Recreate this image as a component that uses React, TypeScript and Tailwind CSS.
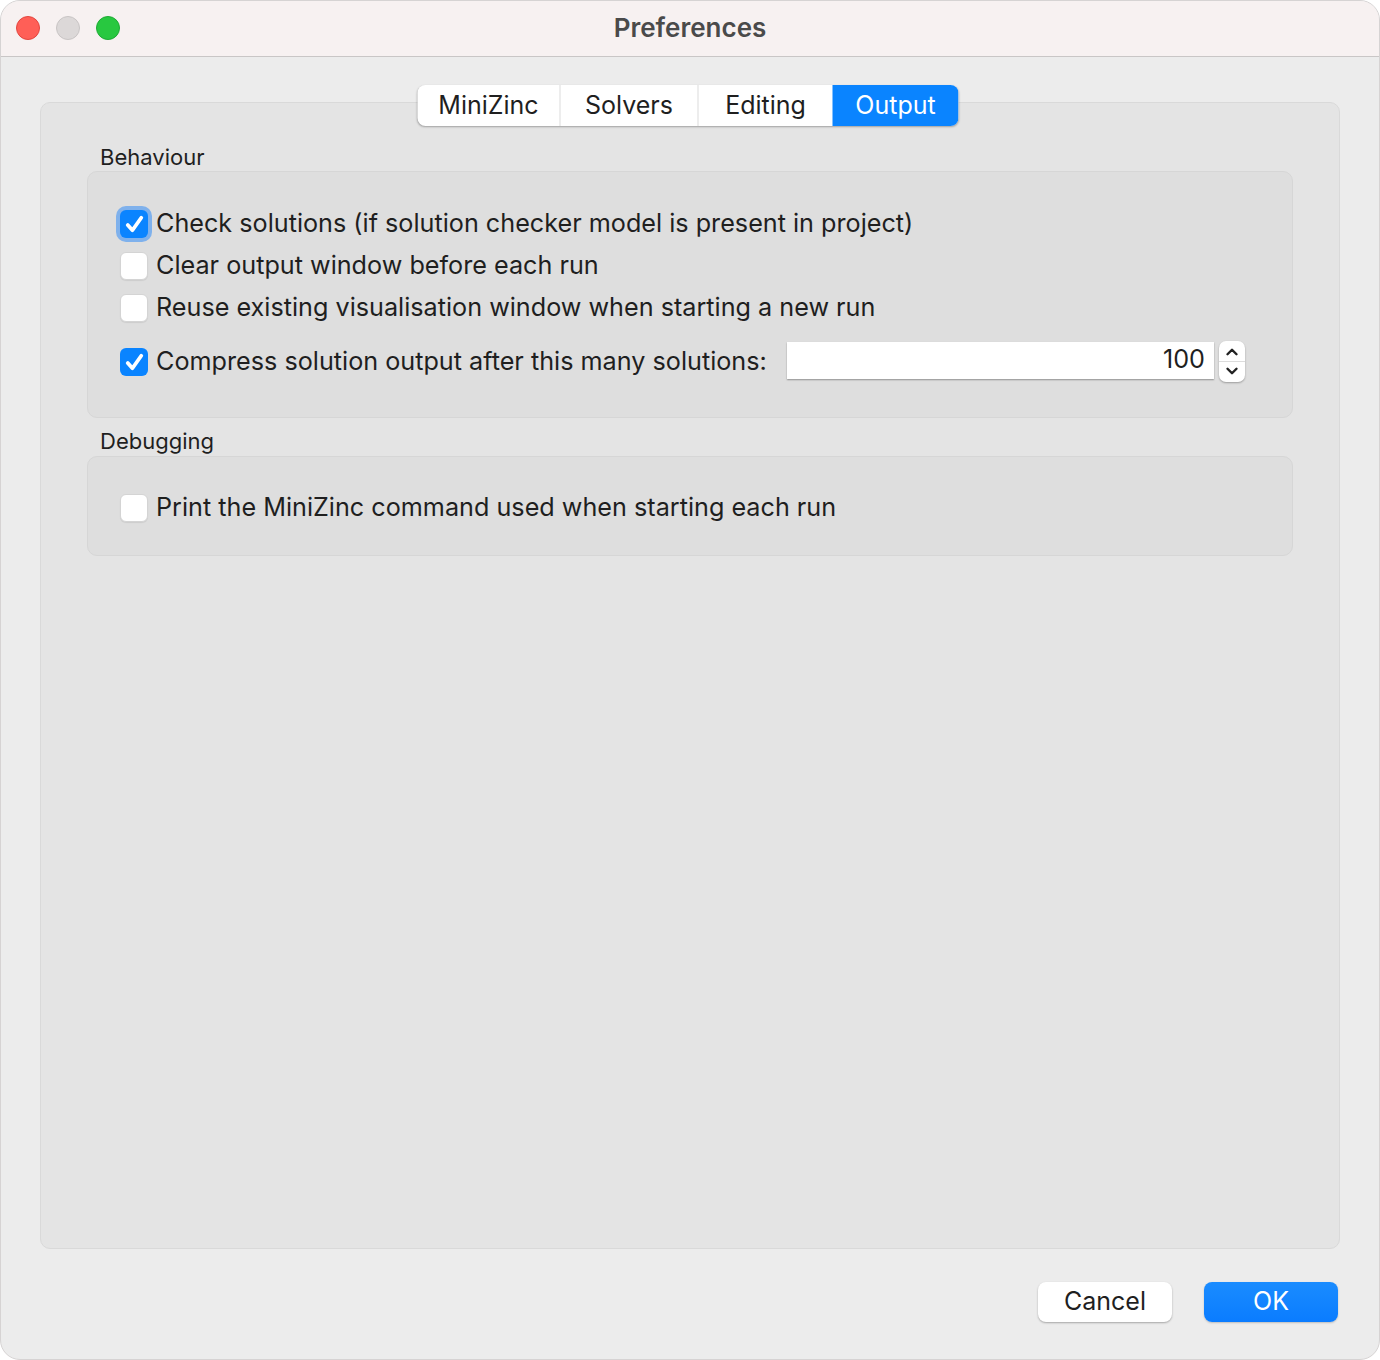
import { ChevronUp, ChevronDown } from "lucide-react"

function Box({ checked, focused }: { checked?: boolean; focused?: boolean }) {
  if (checked) {
    return (
      <span
        className={
          "flex h-[28px] w-[28px] shrink-0 items-center justify-center rounded-[6px] bg-[#0a84ff] " +
          (focused ? "ring-[4px] ring-[#7fb1ec]" : "")
        }
      >
        <svg viewBox="0 0 24 24" className="h-[25px] w-[25px]" fill="none">
          <path d="M5.5 12.5 L10 17.5 L18.5 5.5" stroke="white" strokeWidth="3.6" strokeLinecap="round" strokeLinejoin="round" />
        </svg>
      </span>
    )
  }
  return (
    <span className="block h-[28px] w-[28px] shrink-0 rounded-[6px] border border-[#d4d4d4] bg-white shadow-[0_1px_1px_rgba(0,0,0,0.08)]" />
  )
}

function Row({ label, checked, focused }: { label: string; checked?: boolean; focused?: boolean }) {
  return (
    <div className="flex h-[42px] items-center gap-[8px]">
      <Box checked={checked} focused={focused} />
      <span>{label}</span>
    </div>
  )
}

export default function App() {
  const tabs = ["MiniZinc", "Solvers", "Editing", "Output"]
  const tabWidths = ["w-[143px]", "w-[138px]", "w-[134px]", "w-[126px]"]

  return (
    <div
      className="h-[1360px] w-[1380px] bg-white text-[#1f1f1f]"
      style={{ fontFamily: "Inter, 'Noto Sans', sans-serif" }}
    >
      <div className="flex h-full w-full flex-col overflow-hidden rounded-[20px] border border-[#d6d3d3] bg-[#ececec]">
        {/* title bar */}
        <div className="relative flex h-[56px] shrink-0 items-center justify-center border-b border-[#c9c6c6] bg-[#f7f1f1]">
          <div className="absolute left-[15px] top-[15px] flex gap-[16px]">
            <span className="h-[24px] w-[24px] rounded-full border border-[#e2463f] bg-[#ff5f57]" />
            <span className="h-[24px] w-[24px] rounded-full border border-[#c8c4c4] bg-[#dcd8d8]" />
            <span className="h-[24px] w-[24px] rounded-full border border-[#1eaa34] bg-[#28c840]" />
          </div>
          <span className="-mt-[2px] text-[26px] font-semibold text-[#4a4a4a]">Preferences</span>
        </div>

        {/* body */}
        <div className="flex flex-1 flex-col px-[39px] pt-[45px]">
          <div className="relative flex flex-1 flex-col rounded-[10px] border border-[#d9d9d9] bg-[#e4e4e4] px-[46px] pt-[40px]">
            <div className="absolute left-1/2 top-[-18px] ml-[-2px] flex h-[41px] -translate-x-1/2 overflow-hidden rounded-[8px] bg-white text-[25px] shadow-[0_1px_2px_rgba(0,0,0,0.3)]">
              {tabs.map((t, i) => (
                <div
                  key={t}
                  className={
                    "flex items-center justify-center " +
                    tabWidths[i] +
                    (i === 3
                      ? " bg-[#0a84ff] text-white"
                      : " text-[#1f1f1f]") +
                    (i < 2 ? " border-r border-[#dcdcdc]" : "")
                  }
                >
                  {t}
                </div>
              ))}
            </div>

            <div className="pl-[13px] text-[22px] leading-[28px]">Behaviour</div>
            <div className="rounded-[10px] border border-[#d6d6d6] bg-[#dedede] pb-[34px] pl-[32px] pr-[47px] pt-[31px] text-[25.2px]">
              <Row label="Check solutions (if solution checker model is present in project)" checked focused />
              <Row label="Clear output window before each run" />
              <Row label="Reuse existing visualisation window when starting a new run" />
              <div className="mt-[12px] flex h-[42px] items-center gap-[8px]">
                <Box checked />
                <span>Compress solution output after this many solutions:</span>
                <div className="-mt-[4px] ml-[12px] flex h-[37px] flex-1 items-center justify-end bg-white pr-[9px] shadow-[0_1px_1.5px_rgba(0,0,0,0.35)]">
                  100
                </div>
                <div className="-mt-[2px] ml-[-3px] flex h-[41px] w-[26px] flex-col items-center justify-center rounded-[7px] bg-white shadow-[0_1px_2px_rgba(0,0,0,0.3)]">
                  <ChevronUp className="h-[18px] w-[18px] text-[#222]" strokeWidth={3.2} />
                  <span className="h-px w-full bg-[#dcdcdc]" />
                  <ChevronDown className="h-[18px] w-[18px] text-[#222]" strokeWidth={3.2} />
                </div>
              </div>
            </div>

            <div className="mt-[8px] pl-[13px] text-[22px] leading-[30px]">Debugging</div>
            <div className="rounded-[10px] border border-[#d6d6d6] bg-[#dedede] pb-[26px] pl-[32px] pr-[33px] pt-[30px] text-[25.2px]">
              <Row label="Print the MiniZinc command used when starting each run" />
            </div>
          </div>

          <div className="flex h-[110px] shrink-0 items-center justify-end gap-[32px] pb-[4px] pr-[2px]">
            <button className="h-[40px] w-[134px] rounded-[8px] bg-white text-[25px] text-[#1f1f1f] shadow-[0_1px_2px_rgba(0,0,0,0.3)]">
              Cancel
            </button>
            <button className="h-[40px] w-[134px] rounded-[8px] bg-gradient-to-b from-[#1a8cff] to-[#0a7cff] text-[25px] text-white shadow-[0_1px_2px_rgba(0,0,0,0.2)]">
              OK
            </button>
          </div>
        </div>
      </div>
    </div>
  )
}
